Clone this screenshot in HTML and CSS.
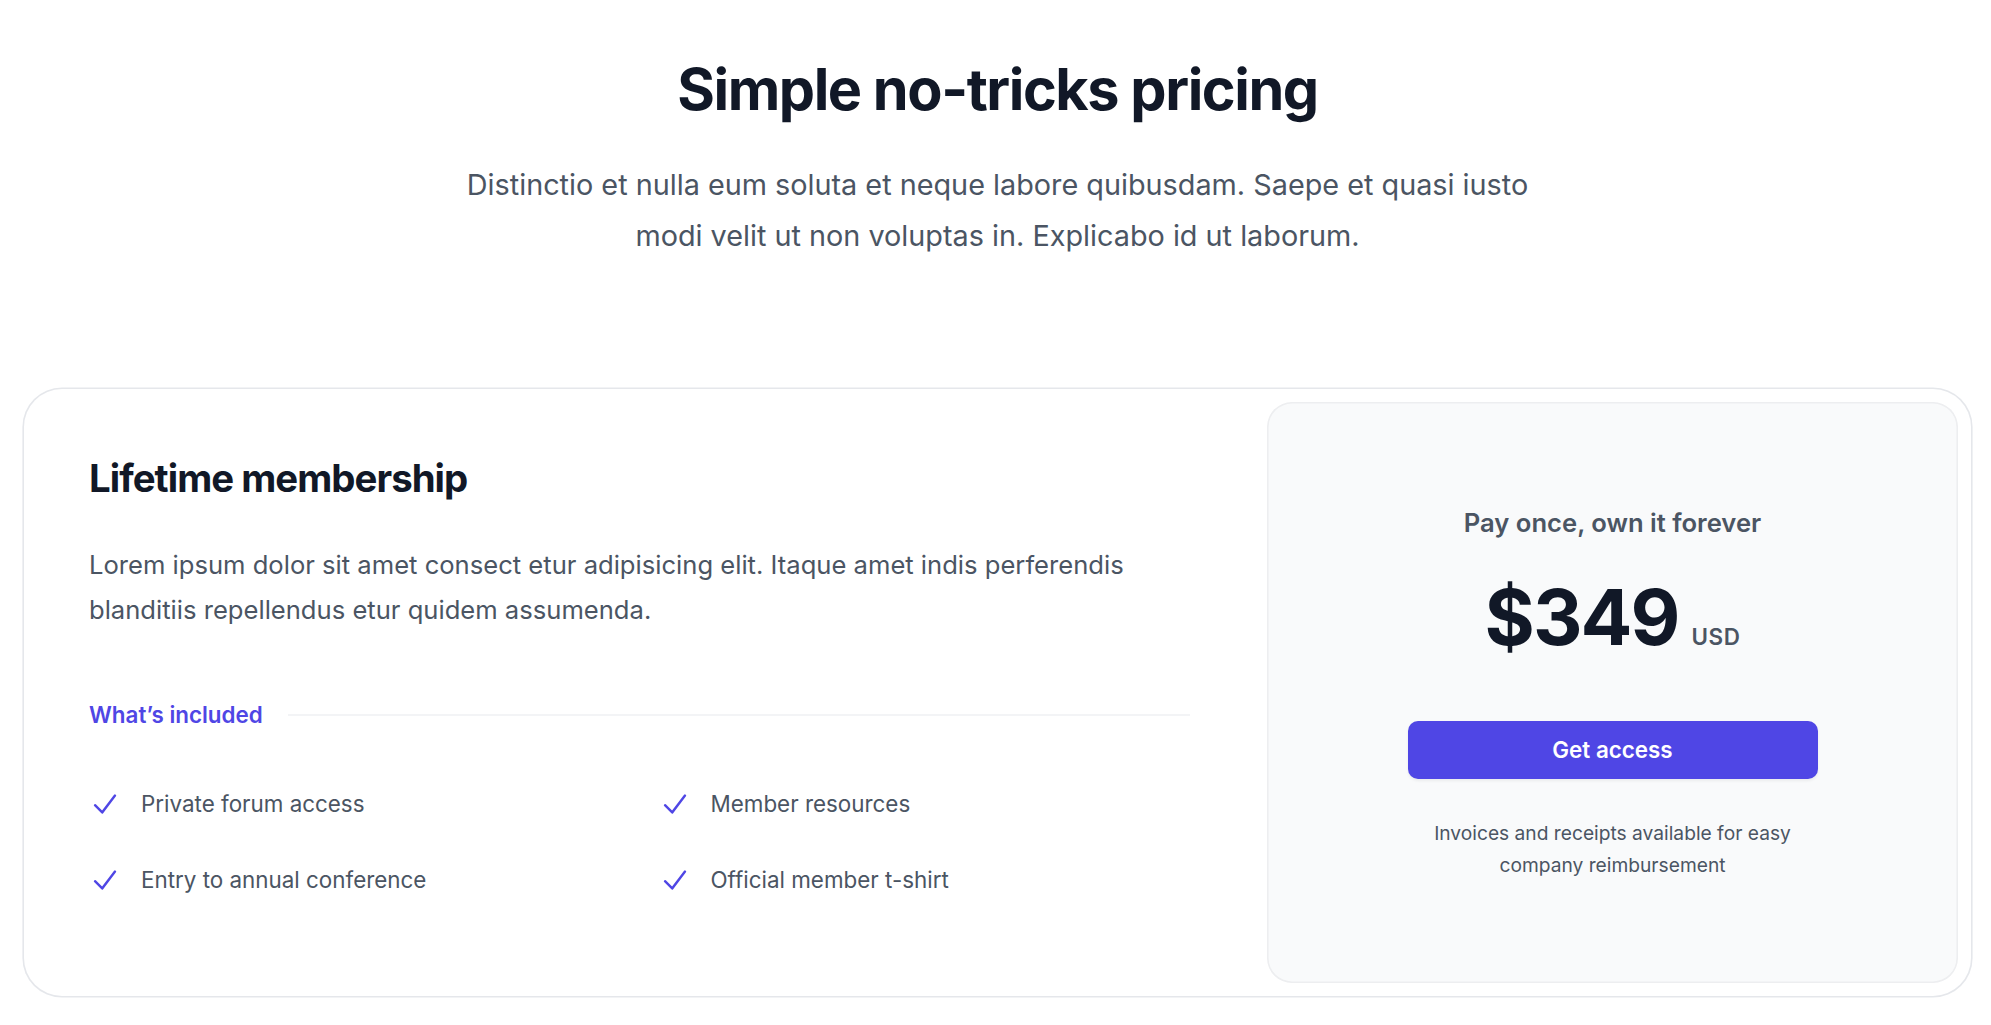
FILE: index.html
```html
<!DOCTYPE html>
<html lang="en">
<head>
<meta charset="utf-8">
<title>Pricing</title>
<link rel="stylesheet" href="styles.css">
</head>
<body>
<section class="page">
  <header class="intro">
    <h2 class="title">Simple no-tricks pricing</h2>
    <p class="lead">Distinctio et nulla eum soluta et neque labore quibusdam. Saepe et quasi iusto modi velit ut non voluptas in. Explicabo id ut laborum.</p>
  </header>
  <div class="card">
    <div class="card-main">
      <h3 class="plan">Lifetime membership</h3>
      <p class="plan-desc">Lorem ipsum dolor sit amet consect etur adipisicing elit. Itaque amet indis perferendis blanditiis repellendus etur quidem assumenda.</p>
      <div class="included">
        <h4 class="included-label">What’s included</h4>
        <div class="included-line"></div>
      </div>
      <ul class="features">
        <li class="feature"><svg class="check" viewBox="0 0 20 20" fill="currentColor" aria-hidden="true"><path fill-rule="evenodd" d="M16.704 4.153a.75.75 0 01.143 1.052l-8 10.5a.75.75 0 01-1.127.075l-4.5-4.5a.75.75 0 011.06-1.06l3.894 3.893 7.48-9.817a.75.75 0 011.05-.143z" clip-rule="evenodd"/></svg>Private forum access</li>
        <li class="feature"><svg class="check" viewBox="0 0 20 20" fill="currentColor" aria-hidden="true"><path fill-rule="evenodd" d="M16.704 4.153a.75.75 0 01.143 1.052l-8 10.5a.75.75 0 01-1.127.075l-4.5-4.5a.75.75 0 011.06-1.06l3.894 3.893 7.48-9.817a.75.75 0 011.05-.143z" clip-rule="evenodd"/></svg>Member resources</li>
        <li class="feature"><svg class="check" viewBox="0 0 20 20" fill="currentColor" aria-hidden="true"><path fill-rule="evenodd" d="M16.704 4.153a.75.75 0 01.143 1.052l-8 10.5a.75.75 0 01-1.127.075l-4.5-4.5a.75.75 0 011.06-1.06l3.894 3.893 7.48-9.817a.75.75 0 011.05-.143z" clip-rule="evenodd"/></svg>Entry to annual conference</li>
        <li class="feature"><svg class="check" viewBox="0 0 20 20" fill="currentColor" aria-hidden="true"><path fill-rule="evenodd" d="M16.704 4.153a.75.75 0 01.143 1.052l-8 10.5a.75.75 0 01-1.127.075l-4.5-4.5a.75.75 0 011.06-1.06l3.894 3.893 7.48-9.817a.75.75 0 011.05-.143z" clip-rule="evenodd"/></svg>Official member t-shirt</li>
      </ul>
    </div>
    <div class="card-side">
      <div class="panel">
        <div class="panel-inner">
          <p class="panel-kicker">Pay once, own it forever</p>
          <p class="price"><span class="amount">$349</span><span class="currency">USD</span></p>
          <a href="#" class="cta">Get access</a>
          <p class="note">Invoices and receipts available for easy company reimbursement</p>
        </div>
      </div>
    </div>
  </div>
</section>
</body>
</html>
```

FILE: styles.css
```css
* { box-sizing: border-box; }
html, body { margin: 0; padding: 0; background: #ffffff; }
body {
  font-family: Inter, "Noto Sans", "Liberation Sans", sans-serif;
  color: #111827;
  -webkit-font-smoothing: antialiased;
}
.page {
  padding: 57px 20px 27px 24px;
}
.intro {
  text-align: center;
}
.title {
  margin: 0;
  font-size: 57.6px;
  line-height: 64px;
  font-weight: 700;
  letter-spacing: -0.025em;
  color: #111827;
}
.lead {
  margin: 38px auto 0;
  max-width: 1080px;
  font-size: 28.8px;
  line-height: 51px;
  color: #4b5563;
}
.card {
  margin-top: 128px;
  display: flex;
  border-radius: 38px;
  box-shadow: 0 0 0 1.6px #e5e7eb;
}
.card-main {
  flex: 1 1 auto;
  padding: 64px 64px 64px 65px;
}
.plan {
  margin: 0;
  font-size: 38.4px;
  line-height: 51px;
  font-weight: 700;
  letter-spacing: -0.025em;
  color: #111827;
}
.plan-desc {
  margin: 38px 0 0;
  font-size: 25.6px;
  line-height: 45px;
  color: #4b5563;
}
.included {
  margin-top: 64px;
  display: flex;
  align-items: center;
  gap: 25px;
}
.included-label {
  margin: 0;
  flex: none;
  font-size: 22.4px;
  line-height: 38px;
  font-weight: 600;
  color: #4f46e5;
}
.included-line {
  flex: 1 1 auto;
  height: 1.6px;
  background: #f3f4f6;
}
.features {
  list-style: none;
  margin: 51px 0 0;
  padding: 0;
  display: grid;
  grid-template-columns: 1fr 1fr;
  gap: 38px;
  font-size: 22.4px;
  line-height: 38px;
  color: #4b5563;
}
.feature {
  display: flex;
  gap: 20px;
}
.check {
  flex: none;
  width: 32px;
  height: 38px;
  color: #4f46e5;
}
.card-side {
  flex: none;
  width: 717px;
  padding: 13px;
}
.panel {
  height: 100%;
  border-radius: 25px;
  background: #f9fafb;
  box-shadow: inset 0 0 0 1.6px rgba(17, 24, 39, 0.05);
  padding: 102px 0;
  display: flex;
  flex-direction: column;
  justify-content: center;
  text-align: center;
}
.panel-inner {
  margin: 0 auto;
  max-width: 512px;
  padding: 0 51px;
}
.panel-kicker {
  margin: 0;
  font-size: 25.6px;
  line-height: 38px;
  font-weight: 600;
  color: #4b5563;
}
.price {
  margin: 38px 0 0;
  display: flex;
  align-items: baseline;
  justify-content: center;
  gap: 13px;
}
.amount {
  font-size: 76.8px;
  line-height: 1;
  font-weight: 700;
  letter-spacing: -0.025em;
  color: #111827;
}
.currency {
  font-size: 22.4px;
  line-height: 38px;
  font-weight: 600;
  letter-spacing: 0.025em;
  color: #4b5563;
}
.cta {
  margin-top: 64px;
  display: block;
  width: 100%;
  border-radius: 10px;
  background: #4f46e5;
  padding: 13px 19px;
  font-size: 22.4px;
  line-height: 32px;
  font-weight: 600;
  color: #ffffff;
  text-decoration: none;
  box-shadow: 0 1.6px 3px rgba(0, 0, 0, 0.06);
}
.note {
  margin: 38px 0 0;
  font-size: 19.2px;
  line-height: 32px;
  color: #4b5563;
}
```
